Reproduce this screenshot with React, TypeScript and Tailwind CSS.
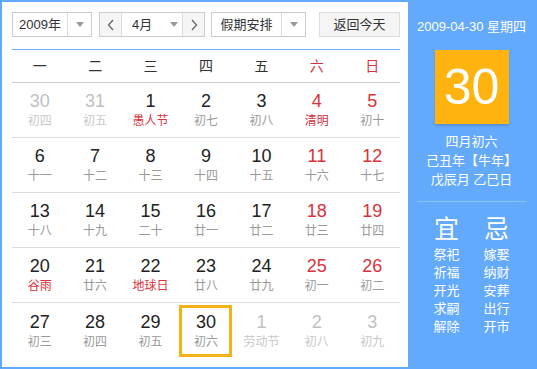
const WEEK = ['一', '二', '三', '四', '五', '六', '日'];

type Day = { n: number; lunar: string; out?: boolean; red?: boolean; redLunar?: boolean; sel?: boolean };

const ROWS: Day[][] = [
  [
    { n: 30, lunar: '初四', out: true },
    { n: 31, lunar: '初五', out: true },
    { n: 1, lunar: '愚人节', redLunar: true },
    { n: 2, lunar: '初七' },
    { n: 3, lunar: '初八' },
    { n: 4, lunar: '清明', red: true, redLunar: true },
    { n: 5, lunar: '初十', red: true },
  ],
  [
    { n: 6, lunar: '十一' },
    { n: 7, lunar: '十二' },
    { n: 8, lunar: '十三' },
    { n: 9, lunar: '十四' },
    { n: 10, lunar: '十五' },
    { n: 11, lunar: '十六', red: true },
    { n: 12, lunar: '十七', red: true },
  ],
  [
    { n: 13, lunar: '十八' },
    { n: 14, lunar: '十九' },
    { n: 15, lunar: '二十' },
    { n: 16, lunar: '廿一' },
    { n: 17, lunar: '廿二' },
    { n: 18, lunar: '廿三', red: true },
    { n: 19, lunar: '廿四', red: true },
  ],
  [
    { n: 20, lunar: '谷雨', redLunar: true },
    { n: 21, lunar: '廿六' },
    { n: 22, lunar: '地球日', redLunar: true },
    { n: 23, lunar: '廿八' },
    { n: 24, lunar: '廿九' },
    { n: 25, lunar: '初一', red: true },
    { n: 26, lunar: '初二', red: true },
  ],
  [
    { n: 27, lunar: '初三' },
    { n: 28, lunar: '初四' },
    { n: 29, lunar: '初五' },
    { n: 30, lunar: '初六', sel: true },
    { n: 1, lunar: '劳动节', out: true },
    { n: 2, lunar: '初八', out: true },
    { n: 3, lunar: '初九', out: true },
  ],
];

const YI = ['祭祀', '祈福', '开光', '求嗣', '解除'];
const JI = ['嫁娶', '纳财', '安葬', '出行', '开市'];

const Caret = () => (
  <span className="w-0 h-0 border-x-[4px] border-x-transparent border-t-[5px] border-t-[#999]" />
);

const DayCell = ({ d }: { d: Day }) => {
  const numColor = d.out ? 'text-[#c0c0c0]' : d.red ? 'text-[#d8323c]' : 'text-[#222]';
  const lunarColor = d.out ? 'text-[#c8c8c8]' : d.redLunar ? 'text-[#d8323c]' : 'text-[#999]';
  return (
    <div className="flex-1 flex items-center justify-center">
      <div
        className={`flex flex-col items-center justify-center w-[53px] h-[52px] ${
          d.sel ? 'border-[3px] border-[#f3b316]' : ''
        }`}
      >
        <span className={`text-[18px] leading-[20px] ${numColor}`}>{d.n}</span>
        <span className={`text-[12px] leading-[16px] mt-[2px] ${lunarColor}`}>{d.lunar}</span>
      </div>
    </div>
  );
};

const App = () => {
  return (
    <div
      className="w-[537px] h-[369px] border-2 border-[#60a9fd] flex bg-white"
      style={{ fontFamily: '"Liberation Sans", Arial, "Noto Sans CJK SC", sans-serif' }}
    >
      <div className="w-[406px] pl-[10px] pr-[8px] pt-[10px] flex flex-col">
        <div className="flex items-center h-[25px] text-[13px] text-[#333]">
          <div className="flex w-[80px] h-full border border-[#ccc]">
            <span className="flex-1 flex items-center justify-center">2009年</span>
            <span className="w-[24px] border-l border-[#ddd] flex items-center justify-center">
              <Caret />
            </span>
          </div>
          <div className="flex w-[106px] h-full border border-[#ccc] ml-[7px]">
            <span className="w-[22px] bg-[#f5f5f5] border-r border-[#ddd] flex items-center justify-center text-[#666]">
              <svg width="8" height="12" viewBox="0 0 8 12">
                <path d="M6 1 L1.5 6 L6 11" stroke="#666" strokeWidth="1.3" fill="none" />
              </svg>
            </span>
            <span className="flex-1 flex items-center pl-[10px]">4月</span>
            <span className="w-[16px] flex items-center justify-center">
              <Caret />
            </span>
            <span className="w-[22px] bg-[#f5f5f5] border-l border-[#ddd] flex items-center justify-center">
              <svg width="8" height="12" viewBox="0 0 8 12">
                <path d="M2 1 L6.5 6 L2 11" stroke="#666" strokeWidth="1.3" fill="none" />
              </svg>
            </span>
          </div>
          <div className="flex w-[95px] h-full border border-[#ccc] ml-[6px]">
            <span className="flex-1 flex items-center justify-center">假期安排</span>
            <span className="w-[24px] border-l border-[#ddd] flex items-center justify-center">
              <Caret />
            </span>
          </div>
          <button className="w-[81px] h-full ml-auto border border-[#ddd] bg-[#f5f5f5] text-[#333]">返回今天</button>
        </div>

        <div className="mt-[12px] border-t border-[#6fb0f5] border-b border-b-[#ccc] h-[34px] flex items-center text-[14px]">
          {WEEK.map((w, i) => (
            <span key={w} className={`flex-1 text-center ${i >= 5 ? 'text-[#d8323c]' : 'text-[#333]'}`}>
              {w}
            </span>
          ))}
        </div>

        {ROWS.map((row, r) => (
          <div key={r} className={`flex h-[55px] ${r < 4 ? 'border-b border-[#ddd]' : ''}`}>
            {row.map((d, i) => (
              <DayCell key={i} d={d} />
            ))}
          </div>
        ))}
      </div>

      <div className="flex-1 bg-[#63aafc] text-white flex flex-col items-center">
        <div className="mt-[16px] text-[13px] leading-[18px]">2009-04-30 星期四</div>
        <div className="mt-[14px] w-[74px] h-[74px] bg-[#ffb30f] shadow-[0_2px_2px_rgba(0,0,0,0.15)] flex items-center justify-center text-[50px] leading-none">
          30
        </div>
        <div className="mt-[8px] text-[13px] leading-[19px] text-center">
          <div>四月初六</div>
          <div>己丑年【牛年】</div>
          <div>戊辰月 乙巳日</div>
        </div>
        <div className="mt-[12px] w-[110px] border-t border-[#8cc2fd]" />
        <div className="mt-[10px] flex gap-[24px]">
          <div className="flex flex-col items-center">
            <span className="text-[25px] leading-[34px]">宜</span>
            {YI.map((t) => (
              <span key={t} className="text-[13px] leading-[18px]">
                {t}
              </span>
            ))}
          </div>
          <div className="flex flex-col items-center">
            <span className="text-[25px] leading-[34px]">忌</span>
            {JI.map((t) => (
              <span key={t} className="text-[13px] leading-[18px]">
                {t}
              </span>
            ))}
          </div>
        </div>
      </div>
    </div>
  );
};

export default App;
